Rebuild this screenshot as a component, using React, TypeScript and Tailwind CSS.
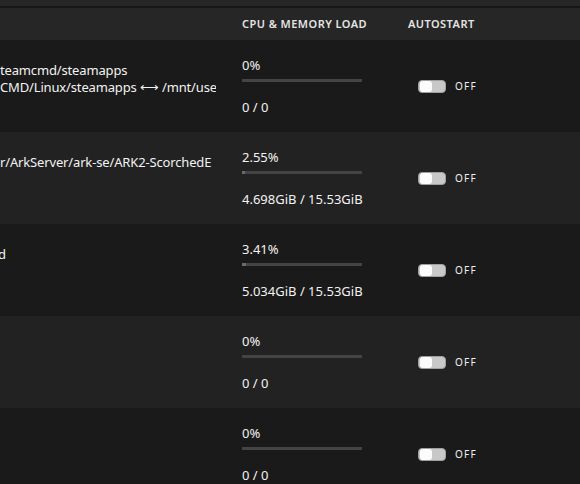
import React from "react";

type Row = {
  lines: { text: string; shift?: number }[];
  cpu: string;
  pct: number;
  mem: string;
  alt: boolean;
};

const rows: Row[] = [
  {
    lines: [
      { text: "teamcmd/steamapps" },
      { text: "CMD/Linux/steamapps \u27F7 /mnt/use" },
    ],
    cpu: "0%",
    pct: 0,
    mem: "0 / 0",
    alt: false,
  },
  {
    lines: [{ text: "r/ArkServer/ark-se/ARK2-ScorchedE" }],
    cpu: "2.55%",
    pct: 2.55,
    mem: "4.698GiB / 15.53GiB",
    alt: true,
  },
  {
    lines: [{ text: "d", shift: -2 }],
    cpu: "3.41%",
    pct: 3.41,
    mem: "5.034GiB / 15.53GiB",
    alt: false,
  },
  { lines: [], cpu: "0%", pct: 0, mem: "0 / 0", alt: true },
  { lines: [], cpu: "0%", pct: 0, mem: "0 / 0", alt: false },
];

function Toggle() {
  return (
    <div className="flex items-center">
      <div className="w-[28px] h-[13px] rounded-[4px] bg-[#c8c8c8] border border-[#a0a0a0] flex items-center p-[1px]">
        <div className="w-[12px] h-[11px] rounded-[3px] bg-[#fcfcfc]" />
      </div>
      <span className="ml-[9px] text-[10px] tracking-[1.2px] text-[#f0f0f0] leading-none">
        OFF
      </span>
    </div>
  );
}

export default function App() {
  return (
    <div className="w-[580px] h-[484px] overflow-hidden bg-[#1a1a1a] font-['Noto_Sans',sans-serif] text-[#f2f2f2]">
      <div className="h-[6px] bg-[#262626]" />
      <div className="h-[2px] bg-[#171717]" />
      <div className="h-[32px] bg-[#262626] flex items-center text-[11px] font-semibold tracking-[0.45px] text-[#e4e4e4]">
        <div className="w-[242px]" />
        <div className="w-[166px]">CPU &amp; MEMORY LOAD</div>
        <div>AUTOSTART</div>
      </div>
      {rows.map((r, i) => (
        <div
          key={i}
          className={`h-[92px] flex ${r.alt ? "bg-[#222222]" : "bg-[#1a1a1a]"}`}
        >
          <div className="w-[216px] overflow-hidden pt-[22px] text-[13px] leading-[17px] tracking-[-0.15px] whitespace-nowrap">
            {r.lines.map((l, j) => (
              <div key={j} style={l.shift ? { marginLeft: l.shift } : undefined}>
                {l.text}
              </div>
            ))}
          </div>
          <div className="w-[26px]" />
          <div className="w-[166px] pt-[17px] text-[13px] leading-[17px]">
            <div>{r.cpu}</div>
            <div className="mt-[5px] w-[120px] h-[3px] bg-[#444444]">
              <div
                className="h-full bg-[#6a6a6a]"
                style={{ width: `${r.pct}%` }}
              />
            </div>
            <div className="mt-[17px] whitespace-nowrap">{r.mem}</div>
          </div>
          <div className="flex items-center pl-[10px]">
            <Toggle />
          </div>
        </div>
      ))}
    </div>
  );
}
